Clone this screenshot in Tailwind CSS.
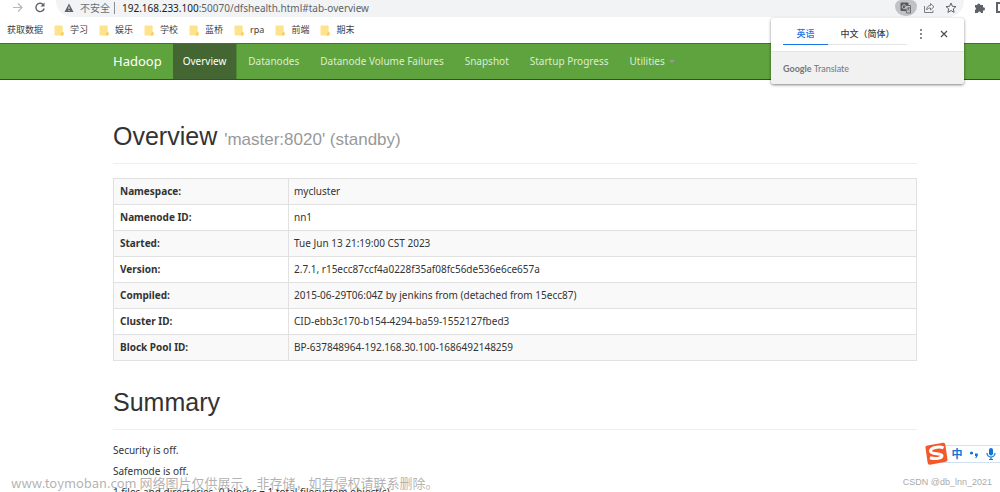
<!DOCTYPE html>
<html lang="zh-CN">
<head>
<meta charset="utf-8">
<title>Namenode information</title>
<script src="https://cdn.jsdelivr.net/npm/@tailwindcss/browser@4"></script>
</head>
<body class="relative h-screen overflow-hidden bg-white font-['Noto_Sans','Noto_Sans_CJK_SC',sans-serif] text-[10px] text-[#333]">
<svg class="hidden">
  <symbol id="folder" viewBox="0 0 10 11"><path d="M1.500.5h6.200a1 1 0 0 1 1 1v5l.8.6v2.400a1 1 0 0 1-1 1h-7a1 1 0 0 1-1-1v-8a1 1 0 0 1 1-1z" fill="#ffe38c"/><path d="M7 10.500V8.500l1.500-1.500 1 .5v2a1 1 0 0 1-1 1z" fill="#f8cf55"/></symbol>
</svg>

<header>
  <div class="flex h-[17px] items-start bg-white">
    <button aria-label="前进" class="ml-3 h-4 w-3"><svg viewBox="0 0 12 16" class="h-4 w-3" fill="none" stroke="#b5b8bb" stroke-width="1.200"><path d="M1 7.500h8.500M6 3.500l4 4-4 4"/></svg></button>
    <button aria-label="刷新" class="ml-2.5 h-4 w-3"><svg viewBox="0 0 12 16" class="h-4 w-3" fill="none" stroke="#5f6368" stroke-width="1.400"><path d="M9.300 4.600A4.200 4.200 0 1 0 10.200 8.500"/><path d="M10.500 2.500v4h-4z" fill="#5f6368" stroke="none"/></svg></button>
    <div class="ml-2.5 mr-4 flex h-[17px] flex-1 items-start rounded-b-2xl bg-[#f1f3f4] pl-2">
      <svg viewBox="0 0 10 16" class="h-4 w-2.5"><path d="M5 3.500L9.500 12h-9z" fill="#5f6368"/><path d="M5 6.500v2.500M5 10v1" stroke="#f1f3f4"/></svg>
      <span class="ml-1.5 leading-4 text-[#6b6f73]">不安全</span>
      <span class="mx-1 mt-0.5 h-3 w-px bg-[#8a8d91]"></span>
      <span class="ml-[3px] flex-1 leading-4 text-[#5f6368]"><span class="text-[#202124]">192.168.233.100</span>:50070/dfshealth.html#tab-overview</span>
      <button aria-label="翻译此页" class="flex h-4 w-[22px] items-center justify-center rounded-b-[10px] rounded-t-md bg-[#c0c2c5]"><svg viewBox="0 0 12 12" class="size-3"><rect x=".5" y=".5" width="8" height="8.500" rx="1" fill="#55595e"/><path d="M5.500 3.500h5v7.500h-4z" fill="#c0c2c5" stroke="#55595e" stroke-width=".8"/><path d="M5.700 3.500a2 2 0 1 0 .5 1.500H4.700" fill="none" stroke="#e2e3e5" stroke-width=".8"/><path d="M7 6H10M8.800 5.200c0 2-.8 2.800-1.300 3.300M7.600 6.500c.4 1 1 1.600 1.900 2" fill="none" stroke="#55595e" stroke-width=".7"/></svg></button>
      <button aria-label="分享" class="ml-1.5 h-4 w-3"><svg viewBox="0 0 12 16" class="h-4 w-3" fill="none" stroke="#7a7e82"><path d="M1.500 6v6.500H10V10.500M3.500 10c.2-3 1.800-4.500 4-4.500V3.500L11 6.800 7.500 10V8C5.500 8 4.500 8.700 3.500 10z"/></svg></button>
      <button aria-label="添加书签" class="ml-2.5 mr-[7px] h-4 w-3"><svg viewBox="0 0 12 16" class="h-4 w-3" fill="none" stroke="#5f6368"><path d="M6 3l1.400 3.300 3.600.3-2.700 2.300.8 3.500L6 10.500l-3.100 1.900.8-3.500L1 6.600l3.600-.3z"/></svg></button>
    </div>
    <button aria-label="扩展程序" class="-ml-1.5 h-4 w-3"><svg viewBox="0 0 12 16" class="h-4 w-3" fill="#5f6368"><path d="M1 5h2.200a1.600 1.600 0 1 1 3.200 0H9v2.400a1.600 1.600 0 1 1 0 3.100v2.500H6.900a1.500 1.500 0 0 0-3 0H1v-3a1.500 1.500 0 0 0 0-2.800z"/></svg></button>
    <button aria-label="侧边栏" class="ml-2.5 mt-0.5 h-[11px] w-1 border-2 border-r-0 border-[#5f6368]"></button>
  </div>
  <nav aria-label="书签" class="flex h-[26px] items-center gap-[11px] pl-[7px] text-[9px] leading-4 text-[#3c4043]">
    <a href="#">获取数据</a>
    <a href="#" class="flex items-center gap-1.5"><svg class="h-[11px] w-2.5"><use href="#folder"/></svg>学习</a>
    <a href="#" class="flex items-center gap-1.5"><svg class="h-[11px] w-2.5"><use href="#folder"/></svg>娱乐</a>
    <a href="#" class="flex items-center gap-1.5"><svg class="h-[11px] w-2.5"><use href="#folder"/></svg>学校</a>
    <a href="#" class="flex items-center gap-1.5"><svg class="h-[11px] w-2.5"><use href="#folder"/></svg>蓝桥</a>
    <a href="#" class="flex items-center gap-1.5"><svg class="h-[11px] w-2.5"><use href="#folder"/></svg>rpa</a>
    <a href="#" class="flex items-center gap-1.5"><svg class="h-[11px] w-2.5"><use href="#folder"/></svg>前端</a>
    <a href="#" class="flex items-center gap-1.5"><svg class="h-[11px] w-2.5"><use href="#folder"/></svg>期末</a>
  </nav>
</header>

<nav aria-label="Hadoop" class="flex h-[37px] items-stretch gap-px border-t border-b border-t-[#4b6b3c] border-b-[#2f5420] bg-[#5fa33e] pl-[113px] text-[#dcedd3]">
  <a href="#" class="flex items-center pr-2.5 text-[13px] text-white">Hadoop</a>
  <a href="#" class="flex items-center border-r border-[#4f8a35] bg-[#446633] px-2.5 text-white">Overview</a>
  <a href="#" class="flex items-center px-2.5">Datanodes</a>
  <a href="#" class="flex items-center px-2.5">Datanode Volume Failures</a>
  <a href="#" class="flex items-center px-2.5">Snapshot</a>
  <a href="#" class="flex items-center px-2.5">Startup Progress</a>
  <a href="#" class="flex items-center gap-1 px-2.5">Utilities <span class="border-x-3 border-t-3 border-x-transparent border-t-[#999]"></span></a>
</nav>

<main class="pl-[113px] pr-[83px]">
  <h1 class="mt-10 border-b border-[#eee] pb-[11px] font-['Liberation_Sans',sans-serif] text-[25px] leading-8">Overview <small class="text-[17px] leading-none text-[#999]">'master:8020' (standby)</small></h1>
  <table class="mt-3.5 w-full border-collapse border border-[#e1e1e1] text-left">
    <tbody>
      <tr class="h-[26px] border border-[#e1e1e1] bg-[#f9f9f9]"><th class="w-[175px] border-r border-[#e1e1e1] px-1.5">Namespace:</th><td class="px-[5px]">mycluster</td></tr>
      <tr class="h-[26px] border border-[#e1e1e1]"><th class="border-r border-[#e1e1e1] px-1.5">Namenode ID:</th><td class="px-[5px]">nn1</td></tr>
      <tr class="h-[26px] border border-[#e1e1e1] bg-[#f9f9f9]"><th class="border-r border-[#e1e1e1] px-1.5">Started:</th><td class="px-[5px]">Tue Jun 13 21:19:00 CST 2023</td></tr>
      <tr class="h-[26px] border border-[#e1e1e1]"><th class="border-r border-[#e1e1e1] px-1.5">Version:</th><td class="px-[5px]">2.7.1, r15ecc87ccf4a0228f35af08fc56de536e6ce657a</td></tr>
      <tr class="h-[26px] border border-[#e1e1e1] bg-[#f9f9f9]"><th class="border-r border-[#e1e1e1] px-1.5">Compiled:</th><td class="px-[5px]">2015-06-29T06:04Z by jenkins from (detached from 15ecc87)</td></tr>
      <tr class="h-[26px] border border-[#e1e1e1]"><th class="border-r border-[#e1e1e1] px-1.5">Cluster ID:</th><td class="px-[5px]">CID-ebb3c170-b154-4294-ba59-1552127fbed3</td></tr>
      <tr class="h-[26px] border border-[#e1e1e1] bg-[#f9f9f9]"><th class="border-r border-[#e1e1e1] px-1.5">Block Pool ID:</th><td class="px-[5px]">BP-637848964-192.168.30.100-1686492148259</td></tr>
    </tbody>
  </table>
  <h1 class="mt-[25px] border-b border-[#eee] pb-[11px] font-['Liberation_Sans',sans-serif] text-[25px] leading-8">Summary</h1>
  <div class="mt-3 flex flex-col gap-[5px] leading-4">
    <p>Security is off.</p>
    <p>Safemode is off.</p>
    <p>1 files and directories, 0 blocks = 1 total filesystem object(s).</p>
  </div>
</main>

<section aria-label="翻译" class="absolute right-9 top-[18px] w-[193px] overflow-hidden rounded-[3px] bg-white shadow-[0_1px_3px_rgba(0,0,0,0.5)]">
  <div class="flex h-[33px] items-start pl-3 text-[9px] font-medium text-[#3c4043]">
    <button class="h-[27px] w-[45px] border-b border-[#1a73e8] pt-1.5 text-[#1a73e8]">英语</button>
    <button class="h-[27px] w-[79px] border-b border-[#e4e5e7] pt-1.5">中文（简体）</button>
    <button aria-label="更多选项" class="ml-2.5 mt-2.5 h-3 w-2"><svg viewBox="0 0 8 12" class="h-3 w-2" fill="#5f6368"><circle cx="4" cy="2" r="1"/><circle cx="4" cy="6" r="1"/><circle cx="4" cy="10" r="1"/></svg></button>
    <button aria-label="关闭" class="ml-[15px] mt-3 size-2"><svg viewBox="0 0 8 8" class="size-2" stroke="#4a4d51" stroke-width="1.200"><path d="M1 1l6 6M7 1L1 7"/></svg></button>
  </div>
  <p class="flex h-[33px] items-center border-t border-[#e4e4e4] bg-[#f1f1f1] pl-3 pt-0.5 font-['Lato',sans-serif] text-[9px] text-[#74777b]"><span class="font-bold">Google</span>&nbsp;Translate</p>
</section>

<aside aria-label="输入法" class="absolute right-0 top-[443px] flex h-[22px] items-center">
  <svg viewBox="0 0 24 24" class="z-10 h-6 w-6"><path d="M3.500 3.500L19 .8a2 2 0 0 1 2.300 1.600l2.200 15.200a2 2 0 0 1-1.700 2.200L6 22.800a2 2 0 0 1-2.300-1.700L1.500 6a2 2 0 0 1 2-2.500z" fill="#f4582a"/><path d="M19.500 5.800C15 4 6.500 5.500 6.500 9c0 4 11.500 1.500 11.500 4.800 0 2.800-7 3.400-12 1.900" fill="none" stroke="#fff" stroke-width="3"/></svg>
  <div class="-ml-2 flex h-[18px] w-[60px] items-center border-y border-[#cfe0ef] bg-white pl-[11px]">
    <button class="w-3 text-[11px] font-bold leading-4 text-[#0f74d4]">中</button>
    <svg viewBox="0 0 10 10" class="ml-1.5 size-2.5" fill="#0f74d4"><circle cx="2.500" cy="4" r="1.600"/><path d="M6 4.500h2.800v2L7.200 9.300l-1-.4.9-1.900H6z"/></svg>
    <svg viewBox="0 0 10 12" class="ml-[7px] h-3 w-2.5"><rect x="3" y="0" width="4" height="7.500" rx="2" fill="#0f74d4"/><path d="M1 5a4 4 0 0 0 8 0M5 9v2M3 11.500h4" fill="none" stroke="#0f74d4" stroke-width="1.200"/></svg>
  </div>
</aside>

<p class="absolute left-[11px] top-[473px] whitespace-nowrap font-['Noto_Sans_CJK_SC',sans-serif] text-[13px] leading-5 text-[#999]/75">www.toymoban.com 网络图片仅供展示，非存储，如有侵权请联系删除。</p>
<p class="absolute right-2 top-[476px] whitespace-nowrap font-['Liberation_Sans',sans-serif] text-[9px] leading-3 text-[#aaa]">CSDN @db_lnn_2021</p>
</body>
</html>
